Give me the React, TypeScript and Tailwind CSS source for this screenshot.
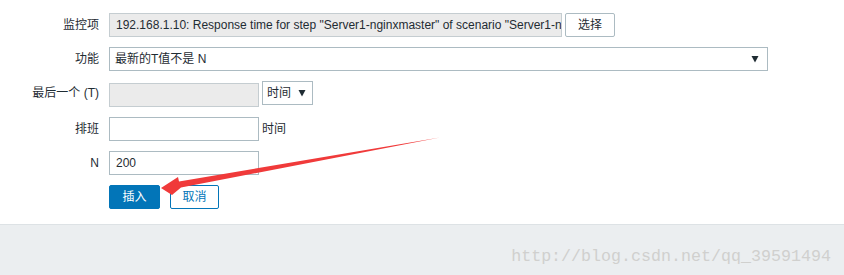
import React from "react";

const font = { fontFamily: '"Liberation Sans", Arial, "Noto Sans CJK SC", sans-serif' };

function Label({ children }: { children: React.ReactNode }) {
  return (
    <div className="w-[99px] shrink-0 text-right leading-[24px] text-[12px] text-[#1f2c33]">{children}</div>
  );
}

function Caret() {
  return (
    <svg width="8" height="8" viewBox="0 0 8 8" className="shrink-0">
      <path d="M0.5 1 L7.5 1 L4 7.5 Z" fill="#1f2c33" />
    </svg>
  );
}

export default function App() {
  return (
    <div className="relative w-[844px] h-[275px] bg-white overflow-hidden" style={font}>
      <div className="h-[224px] pt-[13px] flex flex-col gap-[10px]">
        <div className="flex items-center gap-[10px] h-[24px]">
          <Label>监控项</Label>
          <div className="flex items-center gap-[3px]">
            <div className="w-[453px] h-[24px] border border-[#c5cdd1] bg-[#ebebeb] pl-[6px] text-[12px] leading-[22px] text-[#1f2c33] overflow-hidden whitespace-nowrap">
              192.168.1.10: Response time for step "Server1-nginxmaster" of scenario "Server1-n
            </div>
            <div className="w-[50px] h-[24px] border border-[#acbbc2] rounded-[2px] bg-white text-center text-[12px] leading-[22px] text-[#1f2c33]">
              选择
            </div>
          </div>
        </div>
        <div className="flex items-center gap-[10px] h-[24px]">
          <Label>功能</Label>
          <div className="w-[659px] h-[24px] border border-[#acbbc2] bg-white pl-[5px] pr-[8px] flex items-center justify-between text-[12px] text-[#1f2c33]">
            <span>最新的T值不是 N</span>
            <Caret />
          </div>
        </div>
        <div className="flex items-start gap-[10px] h-[24px]">
          <Label>最后一个 (T)</Label>
          <div className="flex items-start gap-[3px]">
            <div className="mt-[2px] w-[150px] h-[24px] border border-[#c5cdd1] bg-[#ebebeb]" />
            <div className="w-[51px] h-[24px] border border-[#acbbc2] bg-white pl-[4px] pr-[6px] flex items-center justify-between text-[12px] text-[#1f2c33]">
              <span>时间</span>
              <Caret />
            </div>
          </div>
        </div>
        <div className="flex items-center gap-[10px] h-[24px] mt-[2px]">
          <Label>排班</Label>
          <div className="flex items-center gap-[3px]">
            <div className="w-[150px] h-[24px] border border-[#acbbc2] bg-white" />
            <span className="text-[12px] text-[#1f2c33]">时间</span>
          </div>
        </div>
        <div className="flex items-center gap-[10px] h-[24px]">
          <Label>N</Label>
          <div className="w-[150px] h-[24px] border border-[#acbbc2] bg-white px-[6px] text-[12px] leading-[22px] text-[#1f2c33]">
            200
          </div>
        </div>
        <div className="flex items-center gap-[10px] h-[24px]">
          <div className="w-[99px] shrink-0" />
          <div className="flex items-center gap-[10px]">
            <div className="w-[51px] h-[24px] rounded-[2px] bg-[#0275b8] border border-[#0275b8] text-center text-[12px] leading-[22px] text-white">
              插入
            </div>
            <div className="w-[49px] h-[24px] rounded-[2px] bg-white border border-[#0275b8] text-center text-[12px] leading-[22px] text-[#0275b8]">
              取消
            </div>
          </div>
        </div>
      </div>
      <div className="h-[51px] bg-[#ebeef0] border-t border-[#dde2e5] flex items-center justify-end pr-[13px] pt-[12px]">
        <span
          className="text-[16.67px] text-[#d0d0ce]"
          style={{ fontFamily: '"Liberation Mono", "Courier New", monospace' }}
        >
          http://blog.csdn.net/qq_39591494
        </span>
      </div>
      <svg className="absolute left-0 top-0 pointer-events-none" width="844" height="275">
        <polygon
          points="161,188 178,177 179,181.5 440,137.5 181,187.5 172,195"
          fill="#f03a3a"
        />
      </svg>
    </div>
  );
}
